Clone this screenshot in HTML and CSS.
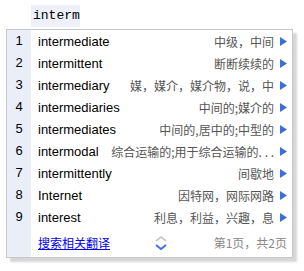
FILE: index.html
```html
<!DOCTYPE html>
<html>
<head>
<meta charset="utf-8">
<link rel="stylesheet" href="styles.css">
</head>
<body>
<div class="input">interm</div>
<div class="panel">
  <div class="row"><span class="num">1</span><span class="cell"><span class="word">intermediate</span><span class="def">中级，中间</span><svg class="arr" width="7" height="9" viewBox="0 0 7 9"><path d="M0 0L7 4.5L0 9Z"/></svg></span></div>
  <div class="row"><span class="num">2</span><span class="cell"><span class="word">intermittent</span><span class="def">断断续续的</span><svg class="arr" width="7" height="9" viewBox="0 0 7 9"><path d="M0 0L7 4.5L0 9Z"/></svg></span></div>
  <div class="row"><span class="num">3</span><span class="cell"><span class="word">intermediary</span><span class="def">媒，媒介，媒介物，说，中</span><svg class="arr" width="7" height="9" viewBox="0 0 7 9"><path d="M0 0L7 4.5L0 9Z"/></svg></span></div>
  <div class="row"><span class="num">4</span><span class="cell"><span class="word">intermediaries</span><span class="def">中间的;媒介的</span><svg class="arr" width="7" height="9" viewBox="0 0 7 9"><path d="M0 0L7 4.5L0 9Z"/></svg></span></div>
  <div class="row"><span class="num">5</span><span class="cell"><span class="word">intermediates</span><span class="def">中间的,居中的;中型的</span><svg class="arr" width="7" height="9" viewBox="0 0 7 9"><path d="M0 0L7 4.5L0 9Z"/></svg></span></div>
  <div class="row"><span class="num">6</span><span class="cell"><span class="word">intermodal</span><span class="def">综合运输的;用于综合运输的. . .</span><svg class="arr" width="7" height="9" viewBox="0 0 7 9"><path d="M0 0L7 4.5L0 9Z"/></svg></span></div>
  <div class="row"><span class="num">7</span><span class="cell"><span class="word">intermittently</span><span class="def">间歇地</span><svg class="arr" width="7" height="9" viewBox="0 0 7 9"><path d="M0 0L7 4.5L0 9Z"/></svg></span></div>
  <div class="row"><span class="num">8</span><span class="cell"><span class="word">Internet</span><span class="def">因特网，网际网路</span><svg class="arr" width="7" height="9" viewBox="0 0 7 9"><path d="M0 0L7 4.5L0 9Z"/></svg></span></div>
  <div class="row"><span class="num">9</span><span class="cell"><span class="word">interest</span><span class="def">利息，利益，兴趣，息</span><svg class="arr" width="7" height="9" viewBox="0 0 7 9"><path d="M0 0L7 4.5L0 9Z"/></svg></span></div>
  <div class="row foot"><span class="num"></span><span class="cell"><a class="link" href="#">搜索相关翻译</a><svg class="pager" width="14" height="18" viewBox="0 0 14 18"><path class="up" d="M2 7L7 3L12 7"/><path class="down" d="M2 11L7 15L12 11"/></svg><span class="page">第1页，共2页</span></span></div>
</div>
</body>
</html>
```
FILE: styles.css
```css
html, body {
  margin: 0;
  padding: 0;
  background: #ffffff;
}
body {
  width: 304px;
  height: 271px;
  overflow: hidden;
}
.input {
  margin: 5px 0 0 31px;
  width: 49px;
  height: 22px;
  line-height: 22px;
  background: #eef0f9;
  font-family: "Liberation Mono", monospace;
  font-size: 13px;
  color: #000;
  padding-left: 2px;
  box-sizing: border-box;
}
.panel {
  margin: 2px 0 0 6px;
  width: 287px;
  box-sizing: border-box;
  border: 1px solid #c8c8c8;
  background: #fff;
  box-shadow: 4px 4px 2px rgba(0, 0, 0, 0.16);
}
.row {
  display: flex;
  height: 22px;
}
.num {
  width: 24px;
  flex: none;
  background: #e9eef9;
  font-family: "Liberation Sans", Arial, sans-serif;
  font-size: 13px;
  line-height: 22px;
  text-align: center;
  color: #000;
}
.cell {
  flex: 1;
  min-width: 0;
  display: flex;
  align-items: center;
  padding: 0 5px 0 7px;
}
.word {
  flex: none;
  font-family: "Liberation Sans", Arial, sans-serif;
  font-size: 13px;
  color: #000;
}
.def {
  flex: 1;
  min-width: 0;
  text-align: right;
  white-space: nowrap;
  overflow: hidden;
  font-family: "Noto Sans CJK SC", sans-serif;
  font-size: 12px;
  color: #555;
  margin-left: 8px;
}
.arr {
  flex: none;
  margin-left: 6px;
  fill: #3b6ee0;
}
.foot {
  height: 29px;
}
.link {
  font-family: "Noto Sans CJK SC", sans-serif;
  font-size: 12px;
  color: #0000ee;
  text-decoration: underline;
}
.pager {
  margin-left: 44px;
  fill: none;
  stroke-width: 1.8;
}
.pager .up {
  stroke: #c8ccd4;
}
.pager .down {
  stroke: #3b6ee0;
}
.page {
  margin-left: auto;
  font-family: "Noto Sans CJK SC", sans-serif;
  font-size: 12px;
  color: #888;
}
```
